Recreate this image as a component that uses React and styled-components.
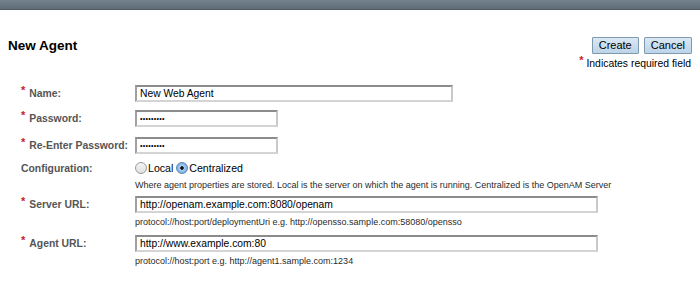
import React from 'react';
import styled, { createGlobalStyle } from 'styled-components';

const GlobalStyle = createGlobalStyle`
  html, body {
    margin: 0;
    padding: 0;
    background: #fff;
  }
  body {
    font-family: "Liberation Sans", Arial, sans-serif;
    color: #000;
  }
`;

const Page = styled.div`
  width: 700px;
  height: 283px;
  overflow: hidden;
  background: #fff;
`;

const TopBar = styled.div`
  height: 9px;
  background: linear-gradient(#74828e, #5f6d79);
  border-bottom: 1px solid #4f5b65;
`;

const Header = styled.div`
  display: flex;
  justify-content: space-between;
  align-items: flex-start;
  padding: 27px 8px 0 8px;
  height: 48px;
`;

const Title = styled.h1`
  margin: 1px 0 0 0;
  font-size: 13.5px;
  font-weight: bold;
  color: #000;
`;

const Actions = styled.div`
  display: flex;
  flex-direction: column;
  align-items: flex-end;
  gap: 3px;
`;

const ButtonRow = styled.div`
  display: flex;
  gap: 5px;
`;

const Button = styled.button`
  height: 17px;
  padding: 0 6px;
  font-family: "Liberation Sans", Arial, sans-serif;
  font-size: 11px;
  color: #000;
  background: linear-gradient(#dbe8f4, #bcd3e8);
  border: 1px solid #7f9aae;
  border-radius: 1px;
  line-height: 15px;
`;

const Required = styled.div`
  font-size: 10.4px;
  color: #000;
  margin-right: 1px;
`;

const Star = styled.span`
  position: relative;
  top: -3px;
  color: #c8202a;
  font-weight: bold;
  font-size: 11px;
  margin-right: ${(p) => p.$gap || 4}px;
`;

const Form = styled.div`
  display: grid;
  grid-template-columns: 114px 1fr;
  padding: 0 0 0 21px;
`;

const Label = styled.div`
  font-size: 10.4px;
  font-weight: bold;
  color: #555;
  line-height: 17px;
  height: ${(p) => p.$h}px;
  white-space: nowrap;
`;

const Field = styled.div`
  height: ${(p) => p.$h}px;
  display: flex;
  flex-direction: column;
  align-items: flex-start;
`;

const Input = styled.input`
  box-sizing: border-box;
  width: ${(p) => p.$w}px;
  height: 17px;
  margin: 0;
  padding: 0 3px;
  font-family: "Liberation Sans", Arial, sans-serif;
  font-size: ${(p) => (p.type === 'password' ? 7 : 10.3)}px;
  letter-spacing: ${(p) => (p.type === 'password' ? 0.3 : 0)}px;
  color: #000;
  background: #fff;
  border-style: solid;
  border-width: 2px;
  border-color: #8c8c8c #c9c9c9 #d4d4d4 #a0a0a0;
  outline: none;
`;

const Help = styled.div`
  font-size: 9px;
  color: #2a2a2a;
  line-height: 11px;
  margin-top: ${(p) => p.$mt || 4}px;
  white-space: nowrap;
`;

const Radios = styled.div`
  display: flex;
  align-items: center;
  font-size: 10.6px;
  color: #000;
  height: 16px;
`;

const RadioOption = styled.label`
  display: flex;
  align-items: center;
  margin-right: 3px;
`;

const RadioDot = styled.span`
  box-sizing: border-box;
  width: 12px;
  height: 12px;
  border-radius: 50%;
  margin-right: 1px;
  border: 1px solid ${(p) => (p.$on ? '#5c86b0' : '#9a9a9a')};
  background: ${(p) =>
    p.$on
      ? 'radial-gradient(circle, #1a1a1a 0 1.5px, #a9d0f3 2px, #5f9fdc 100%)'
      : 'linear-gradient(#f4f4f4, #e0e0e0)'};
`;

const rows = [
  { label: 'Name:', value: 'New Web Agent', w: 318, h: 25 },
  { label: 'Password:', value: 'secret123', w: 143, h: 27, type: 'password' },
  { label: 'Re-Enter Password:', value: 'secret123', w: 143, h: 23, type: 'password' },
];

const App = () => (
  <Page>
    <GlobalStyle />
    <TopBar />
    <Header>
      <Title>New Agent</Title>
      <Actions>
        <ButtonRow>
          <Button>Create</Button>
          <Button>Cancel</Button>
        </ButtonRow>
        <Required>
          <Star $gap={3}>*</Star>Indicates required field
        </Required>
      </Actions>
    </Header>
    <Form>
      {rows.map((r) => (
        <React.Fragment key={r.label}>
          <Label $h={r.h}>
            <Star>*</Star>
            {r.label}
          </Label>
          <Field $h={r.h}>
            <Input $w={r.w} type={r.type || 'text'} defaultValue={r.value} />
          </Field>
        </React.Fragment>
      ))}
      <Label $h={36}>Configuration:</Label>
      <Field $h={36}>
        <Radios>
          <RadioOption>
            <RadioDot />
            Local
          </RadioOption>
          <RadioOption>
            <RadioDot $on />
            Centralized
          </RadioOption>
        </Radios>
        <Help $mt={4}>
          Where agent properties are stored. Local is the server on which the agent is running. Centralized is the OpenAM Server
        </Help>
      </Field>
      <Label $h={39}>
        <Star>*</Star>Server URL:
      </Label>
      <Field $h={39}>
        <Input $w={463} defaultValue="http://openam.example.com:8080/openam" />
        <Help>protocol://host:port/deploymentUri e.g. http://opensso.sample.com:58080/opensso</Help>
      </Field>
      <Label $h={39}>
        <Star>*</Star>Agent URL:
      </Label>
      <Field $h={39}>
        <Input $w={463} defaultValue="http://www.example.com:80" />
        <Help>protocol://host:port e.g. http://agent1.sample.com:1234</Help>
      </Field>
    </Form>
  </Page>
);

export default App;
